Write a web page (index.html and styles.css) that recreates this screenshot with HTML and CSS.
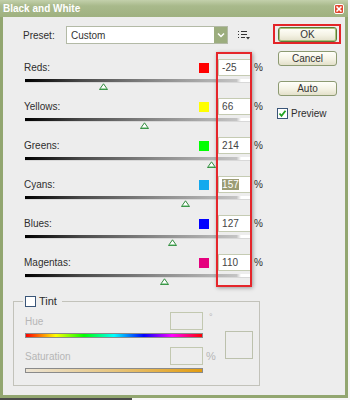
FILE: index.html
```html
<!DOCTYPE html>
<html lang="en">
<head>
    <meta charset="UTF-8">
    <title>Black and White</title>
    <link rel="stylesheet" href="styles.css">
</head>
<body>
    <div class="window">
        <div class="titlebar">
            <span class="title">Black and White</span>
            <span class="close">
                <svg width="8" height="8" viewBox="0 0 8 8"><path d="M1.5 1.5 L6.5 6.5 M6.5 1.5 L1.5 6.5" stroke="#fff" stroke-width="1.6" fill="none"/></svg>
            </span>
        </div>
        <div class="dialog">
            <div class="main">
                <div class="preset-row">
                    <span class="preset-label">Preset:</span>
                    <div class="select">
                        <span class="select-text">Custom</span>
                        <span class="select-btn">
                            <svg width="8" height="6" viewBox="0 0 8 6"><path d="M1 1.5 L4 4.5 L7 1.5" stroke="#fff" stroke-width="1.5" fill="none"/></svg>
                        </span>
                    </div>
                    <span class="menu-icon">
                        <svg width="12" height="10" viewBox="0 0 12 10">
                            <path d="M0 1.5 H1 M3 1.5 H9 M0 4.5 H1 M3 4.5 H9 M0 7.5 H1 M3 7.5 H7" stroke="#333" stroke-width="1" fill="none"/>
                            <path d="M8 7 H12 L10 9.5 Z" fill="#333"/>
                        </svg>
                    </span>
                </div>

                <div class="channels">
                    <div class="highlight"></div>

                    <div class="channel">
                        <div class="channel-top">
                            <span class="channel-label">Reds:</span>
                            <span class="swatch swatch-red"></span>
                            <span class="value">-25</span>
                            <span class="unit">%</span>
                        </div>
                        <div class="track"></div>
                        <div class="thumb" style="margin-left: 75px"><svg width="9" height="7" viewBox="0 0 9 7"><path d="M0.5 6.5 L4.5 0.8 L8.5 6.5 Z" fill="#fff" stroke="#2f8a3c"/><path d="M1.5 6 H7.5" stroke="#49a957"/></svg></div>
                    </div>

                    <div class="channel">
                        <div class="channel-top">
                            <span class="channel-label">Yellows:</span>
                            <span class="swatch swatch-yellow"></span>
                            <span class="value">66</span>
                            <span class="unit">%</span>
                        </div>
                        <div class="track"></div>
                        <div class="thumb" style="margin-left: 116px"><svg width="9" height="7" viewBox="0 0 9 7"><path d="M0.5 6.5 L4.5 0.8 L8.5 6.5 Z" fill="#fff" stroke="#2f8a3c"/><path d="M1.5 6 H7.5" stroke="#49a957"/></svg></div>
                    </div>

                    <div class="channel">
                        <div class="channel-top">
                            <span class="channel-label">Greens:</span>
                            <span class="swatch swatch-green"></span>
                            <span class="value">214</span>
                            <span class="unit">%</span>
                        </div>
                        <div class="track"></div>
                        <div class="thumb" style="margin-left: 183px"><svg width="9" height="7" viewBox="0 0 9 7"><path d="M0.5 6.5 L4.5 0.8 L8.5 6.5 Z" fill="#fff" stroke="#2f8a3c"/><path d="M1.5 6 H7.5" stroke="#49a957"/></svg></div>
                    </div>

                    <div class="channel">
                        <div class="channel-top">
                            <span class="channel-label">Cyans:</span>
                            <span class="swatch swatch-cyan"></span>
                            <span class="value"><span class="selected">157</span></span>
                            <span class="unit">%</span>
                        </div>
                        <div class="track"></div>
                        <div class="thumb" style="margin-left: 157px"><svg width="9" height="7" viewBox="0 0 9 7"><path d="M0.5 6.5 L4.5 0.8 L8.5 6.5 Z" fill="#fff" stroke="#2f8a3c"/><path d="M1.5 6 H7.5" stroke="#49a957"/></svg></div>
                    </div>

                    <div class="channel">
                        <div class="channel-top">
                            <span class="channel-label">Blues:</span>
                            <span class="swatch swatch-blue"></span>
                            <span class="value">127</span>
                            <span class="unit">%</span>
                        </div>
                        <div class="track"></div>
                        <div class="thumb" style="margin-left: 144px"><svg width="9" height="7" viewBox="0 0 9 7"><path d="M0.5 6.5 L4.5 0.8 L8.5 6.5 Z" fill="#fff" stroke="#2f8a3c"/><path d="M1.5 6 H7.5" stroke="#49a957"/></svg></div>
                    </div>

                    <div class="channel">
                        <div class="channel-top">
                            <span class="channel-label">Magentas:</span>
                            <span class="swatch swatch-magenta"></span>
                            <span class="value">110</span>
                            <span class="unit">%</span>
                        </div>
                        <div class="track"></div>
                        <div class="thumb" style="margin-left: 136px"><svg width="9" height="7" viewBox="0 0 9 7"><path d="M0.5 6.5 L4.5 0.8 L8.5 6.5 Z" fill="#fff" stroke="#2f8a3c"/><path d="M1.5 6 H7.5" stroke="#49a957"/></svg></div>
                    </div>
                </div>

                <fieldset class="tint">
                    <legend class="tint-legend">
                        <span class="check"></span>
                        <span>Tint</span>
                    </legend>
                    <div class="tint-controls">
                        <div class="tint-row">
                            <span class="tint-label">Hue</span>
                            <span class="tint-input"></span>
                            <span class="tint-unit tint-unit-deg">°</span>
                        </div>
                        <div class="bar bar-hue"></div>
                        <div class="tint-row tint-row-sat">
                            <span class="tint-label">Saturation</span>
                            <span class="tint-input"></span>
                            <span class="tint-unit">%</span>
                        </div>
                        <div class="bar bar-sat"></div>
                    </div>
                    <div class="tint-swatch"></div>
                </fieldset>
            </div>

            <div class="side">
                <div class="ok-mark">
                    <button class="btn btn-default">OK</button>
                </div>
                <button class="btn btn-cancel">Cancel</button>
                <button class="btn btn-auto">Auto</button>
                <label class="preview">
                    <span class="check">
                        <svg width="9" height="9" viewBox="0 0 9 9"><path d="M1.5 4.5 L3.5 6.8 L7.5 1.8" stroke="#21a321" stroke-width="1.8" fill="none"/></svg>
                    </span>
                    <span>Preview</span>
                </label>
            </div>
        </div>
    </div>
</body>
</html>
```

FILE: styles.css
```css
* {
    box-sizing: border-box;
}
body {
    margin: 0;
    width: 350px;
    height: 400px;
    overflow: hidden;
    background: linear-gradient(to right, #4a4a4a 132px, #f6f6f6 132px);
    font-family: "Liberation Sans", Arial, sans-serif;
    font-size: 10px;
    color: #2e2e2e;
}
.window {
    width: 348px;
    height: 398px;
    display: flex;
    flex-direction: column;
}
.titlebar {
    height: 17px;
    display: flex;
    align-items: center;
    justify-content: space-between;
    padding: 0 4px 0 3px;
    background: linear-gradient(#c3d0ab, #a8b98b 35%, #9fb180);
}
.title {
    color: #fff;
    font-weight: bold;
    font-size: 10px;
}
.close {
    width: 10px;
    height: 10px;
    display: flex;
    align-items: center;
    justify-content: center;
    background: #e0472f;
    border: 1px solid #fff;
    border-radius: 2px;
}
.close svg {
    display: block;
}
.dialog {
    flex: 1;
    display: grid;
    grid-template-columns: 267px 1fr;
    background: #ededed;
    border: 3px solid #92a670;
    border-top: 0;
}
.main {
    padding: 9px 0 0 21px;
}

/* preset */
.preset-row {
    display: flex;
    align-items: center;
    height: 18px;
}
.preset-label {
    width: 43px;
    margin-left: -1px;
}
.select {
    width: 162px;
    height: 18px;
    display: flex;
    align-items: center;
    border: 1px solid #b3baa6;
    background: #fff;
    padding-left: 4px;
}
.select-text {
    flex: 1;
    color: #333;
}
.select-btn {
    width: 13px;
    height: 16px;
    display: flex;
    align-items: center;
    justify-content: center;
    background: #9cad7e;
}
.select-btn svg, .menu-icon svg {
    display: block;
}
.menu-icon {
    margin-left: 10px;
}

/* channel sliders */
.channels {
    position: relative;
    width: 239px;
    margin-top: 15px;
}
.highlight {
    position: absolute;
    left: 192px;
    top: -7px;
    width: 36px;
    height: 235px;
    border: 2px solid #e5262b;
    box-shadow: 1px 1px 4px rgba(0,0,0,0.35);
}
.channel {
    height: 39px;
}
.channel-top {
    display: flex;
    align-items: center;
    height: 17px;
}
.channel-label {
    flex: 1;
}
.swatch {
    width: 10px;
    height: 10px;
}
.swatch-red { background: #ff0000; }
.swatch-yellow { background: #ffff00; }
.swatch-green { background: #00ff00; }
.swatch-cyan { background: #13a9ee; }
.swatch-blue { background: #0000ff; }
.swatch-magenta { background: #e5007e; }
.value {
    width: 33px;
    height: 17px;
    margin-left: 9px;
    padding-left: 3px;
    border: 1px solid #c5cbb3;
    background: #fff;
    color: #444;
    line-height: 15px;
}
.selected {
    background: #9c9c74;
    color: #fff;
}
.unit {
    margin-left: 3px;
}
.track {
    width: 225px;
    height: 4px;
    margin: 3px 0 0 1px;
    background: linear-gradient(to right, #000, #4a4a4a 25%, #8c8c8c 60%, #c4c4c4 94%, #fff 96%);
    border-bottom: 1px solid #d8d8d8;
}
.thumb {
    width: 9px;
    height: 7px;
}
.thumb svg {
    display: block;
}

/* tint group */
.tint {
    display: flex;
    width: 247px;
    margin: 2px 0 0 -11px;
    padding: 5px 6px 12px 11px;
    border: 1px solid #c2c2ba;
}
.tint-legend {
    display: flex;
    align-items: center;
    gap: 3px;
    margin-left: -2px;
    padding: 0 5px 0 2px;
    font-size: 11px;
}
.check {
    width: 11px;
    height: 11px;
    display: flex;
    align-items: center;
    justify-content: center;
    border: 1px solid #3a5578;
    background: #fff;
}
.check svg {
    display: block;
}
.tint-controls {
    width: 191px;
}
.tint-row {
    display: flex;
    align-items: center;
    height: 18px;
}
.tint-row-sat {
    margin-top: 9px;
}
.tint-label {
    flex: 1;
    color: #b6b6b6;
}
.tint-input {
    width: 33px;
    height: 18px;
    border: 1px solid #c2c8b0;
}
.tint-unit {
    width: 13px;
    padding-left: 3px;
    color: #b6b6b6;
    font-size: 11px;
}
.tint-unit-deg {
    padding-left: 6px;
    align-self: flex-start;
    font-size: 9px;
}
.bar {
    width: 178px;
    height: 5px;
    margin-top: 3px;
    border: 1px solid #8a8a8a;
}
.bar-hue {
    background: linear-gradient(to right, #ff0000, #ffff00 17%, #00ff00 33%, #00ffff 50%, #0000ff 67%, #ff00ff 83%, #ff0000);
}
.bar-sat {
    background: linear-gradient(to right, #ece4d4, #e6c47c 50%, #e29c10);
}
.tint-swatch {
    width: 28px;
    height: 28px;
    margin: 19px 0 0 9px;
    border: 1px solid #bcc1ad;
}

/* buttons column */
.side {
    display: flex;
    flex-direction: column;
    align-items: flex-start;
    padding: 7px 0 0 3px;
}
.ok-mark {
    width: 68px;
    padding: 1px 2px 0 3px;
    border: 2px solid #e32428;
}
.btn {
    display: block;
    width: 59px;
    height: 15px;
    padding: 0;
    font-family: inherit;
    font-size: 10px;
    color: #333;
    border: 1px solid #8d9a72;
    border-radius: 3px;
    background: linear-gradient(#fffffa, #f4f2e4 55%, #e3e0ca);
}
.btn-default {
    border-color: #5e7a3a;
    box-shadow: inset 0 0 0 1px #a9c47c;
}
.btn-cancel {
    margin: 7px 0 0 5px;
}
.btn-auto {
    margin: 15px 0 0 5px;
}
.preview {
    display: flex;
    align-items: center;
    gap: 3px;
    margin: 12px 0 0 4px;
}
```
